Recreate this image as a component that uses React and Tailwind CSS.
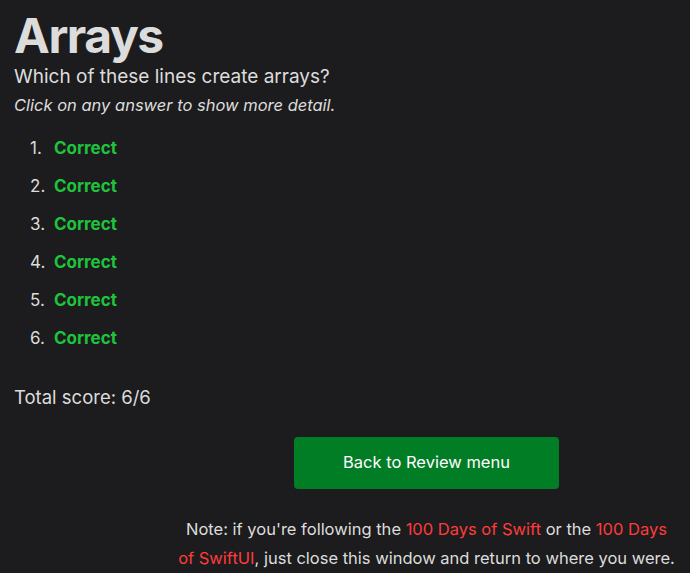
const answers = [1, 2, 3, 4, 5, 6]

export default function App() {
  return (
    <div className="min-h-[573px] bg-[#1c1c1e] text-[#dcdcdc] font-['Inter',sans-serif] pl-[14px] pb-4">
      <h1 className="text-[48px] font-bold leading-[56px] tracking-[-0.03em] pt-[7.5px]">Arrays</h1>
      <p className="text-[19px] leading-[26px]">Which of these lines create arrays?</p>
      <p className="text-[16.5px] italic leading-[26px] mt-[2px]">Click on any answer to show more detail.</p>

      <ol className="mt-[18px] pl-[16px] flex flex-col gap-[14px]">
        {answers.map((n) => (
          <li key={n} className="flex items-baseline text-[17px] leading-[24px]">
            <span className="w-[24px]">{n}.</span>
            <span className="font-bold text-[#1ec43c]">Correct</span>
          </li>
        ))}
      </ol>

      <p className="mt-[34px] text-[18.5px] leading-[26px]">Total score: 6/6</p>

      <div className="ml-[149px] flex flex-col items-center text-center">
        <button
          type="button"
          className="mt-[27px] w-[265px] h-[52px] rounded-[4px] bg-[#017d25] text-white text-[16.5px]"
        >
          Back to Review menu
        </button>
        <p className="mt-[26.5px] w-[501px] text-[16.5px] leading-[29px]">
          Note: if you're following the{' '}
          <span className="text-[#ff3b3b]">100 Days of Swift</span> or the{' '}
          <span className="text-[#ff3b3b]">100 Days of SwiftUI</span>, just close this window and return to where you were.
        </p>
      </div>
    </div>
  )
}
